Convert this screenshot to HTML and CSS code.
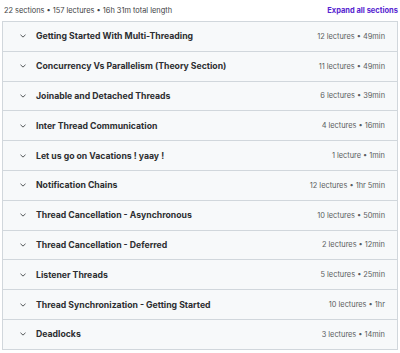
FILE: index.html
```html
<!DOCTYPE html>
<html>
<head>
<meta charset="utf-8">
<link rel="stylesheet" href="styles.css">
</head>
<body>
<div class="page">
  <div class="summary">
    <span class="stats">22 sections • 157 lectures • 16h 31m total length</span>
    <button class="expand">Expand all sections</button>
  </div>
  <div class="list">
    <div class="row"><span class="chev"><svg viewBox="0 0 10 10"><path d="M2.2 3.8 L5 6.4 L7.8 3.8"/></svg></span><span class="title">Getting Started With Multi-Threading</span><span class="meta">12 lectures • 49min</span></div>
    <div class="row"><span class="chev"><svg viewBox="0 0 10 10"><path d="M2.2 3.8 L5 6.4 L7.8 3.8"/></svg></span><span class="title">Concurrency Vs Parallelism (Theory Section)</span><span class="meta">11 lectures • 49min</span></div>
    <div class="row"><span class="chev"><svg viewBox="0 0 10 10"><path d="M2.2 3.8 L5 6.4 L7.8 3.8"/></svg></span><span class="title">Joinable and Detached Threads</span><span class="meta">6 lectures • 39min</span></div>
    <div class="row"><span class="chev"><svg viewBox="0 0 10 10"><path d="M2.2 3.8 L5 6.4 L7.8 3.8"/></svg></span><span class="title">Inter Thread Communication</span><span class="meta">4 lectures • 16min</span></div>
    <div class="row"><span class="chev"><svg viewBox="0 0 10 10"><path d="M2.2 3.8 L5 6.4 L7.8 3.8"/></svg></span><span class="title">Let us go on Vacations ! yaay !</span><span class="meta">1 lecture • 1min</span></div>
    <div class="row"><span class="chev"><svg viewBox="0 0 10 10"><path d="M2.2 3.8 L5 6.4 L7.8 3.8"/></svg></span><span class="title">Notification Chains</span><span class="meta">12 lectures • 1hr 5min</span></div>
    <div class="row"><span class="chev"><svg viewBox="0 0 10 10"><path d="M2.2 3.8 L5 6.4 L7.8 3.8"/></svg></span><span class="title">Thread Cancellation - Asynchronous</span><span class="meta">10 lectures • 50min</span></div>
    <div class="row"><span class="chev"><svg viewBox="0 0 10 10"><path d="M2.2 3.8 L5 6.4 L7.8 3.8"/></svg></span><span class="title">Thread Cancellation - Deferred</span><span class="meta">2 lectures • 12min</span></div>
    <div class="row"><span class="chev"><svg viewBox="0 0 10 10"><path d="M2.2 3.8 L5 6.4 L7.8 3.8"/></svg></span><span class="title">Listener Threads</span><span class="meta">5 lectures • 25min</span></div>
    <div class="row"><span class="chev"><svg viewBox="0 0 10 10"><path d="M2.2 3.8 L5 6.4 L7.8 3.8"/></svg></span><span class="title">Thread Synchronization - Getting Started</span><span class="meta">10 lectures • 1hr</span></div>
    <div class="row"><span class="chev"><svg viewBox="0 0 10 10"><path d="M2.2 3.8 L5 6.4 L7.8 3.8"/></svg></span><span class="title">Deadlocks</span><span class="meta">3 lectures • 14min</span></div>
  </div>
</div>
</body>
</html>
```

FILE: styles.css
```css
* { box-sizing: border-box; }
html, body { margin: 0; padding: 0; background: #fff; }
body {
  font-family: Inter, "Noto Sans", "Liberation Sans", sans-serif;
  color: #2d2f31;
  -webkit-font-smoothing: antialiased;
}
.page {
  width: 400px;
  padding: 0 2px;
}
.summary {
  height: 21px;
  display: flex;
  align-items: center;
  justify-content: space-between;
  padding: 0 0 0 2px;
}
.stats {
  font-size: 7.4px;
  color: #3e4143;
}
.expand {
  border: 0;
  background: none;
  padding: 0;
  font-family: inherit;
  font-size: 7.5px;
  font-weight: 700;
  color: #5624d0;
}
.list {
  border: 1px solid #d1d7dc;
  border-bottom: 0;
}
.row {
  height: 29.8px;
  display: flex;
  align-items: center;
  background: #f7f9fa;
  border-bottom: 1px solid #d1d7dc;
  padding: 0 12px 0 16px;
}
.chev {
  width: 8px;
  height: 8px;
  margin-right: 9px;
  display: flex;
}
.chev svg {
  width: 8px;
  height: 8px;
  fill: none;
  stroke: #3e4143;
  stroke-width: 1.1;
  stroke-linecap: round;
  stroke-linejoin: round;
}
.title {
  flex: 1;
  font-size: 8.7px;
  font-weight: 700;
  color: #2d2f31;
}
.meta {
  font-size: 7.4px;
  color: #5a5d60;
}
```
